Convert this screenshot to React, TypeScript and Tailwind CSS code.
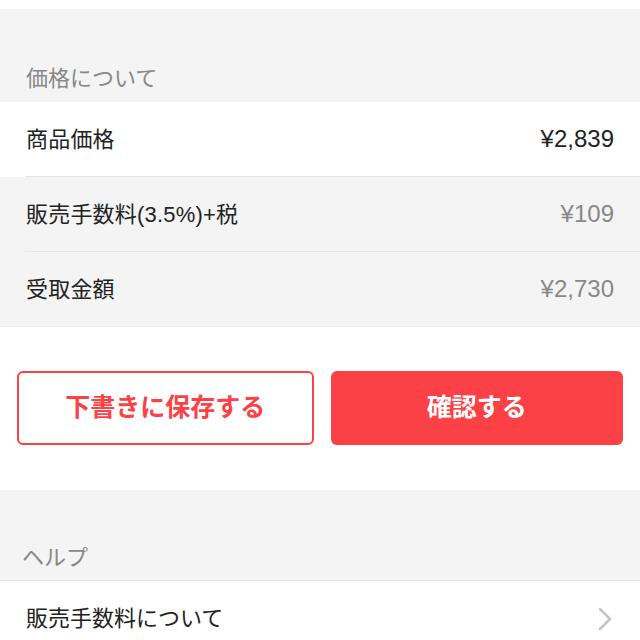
const fees = [
  { label: "商品価格", value: "¥2,839", white: true },
  { label: "販売手数料(3.5%)+税", value: "¥109", white: false },
  { label: "受取金額", value: "¥2,730", white: false },
];

export default function App() {
  return (
    <div
      className="w-[640px] h-[640px] overflow-hidden bg-white text-[#222]"
      style={{ fontFamily: '"Liberation Sans", "Noto Sans CJK JP", sans-serif' }}
    >
      <div className="h-[9px] bg-white" />

      {/* 価格について */}
      <div className="h-[93px] bg-[#f4f4f4] flex items-end px-[26px] pb-[7px]">
        <span className="text-[22px] text-[#888]">価格について</span>
      </div>

      {fees.map((row, i) => (
        <div key={i} className={row.white ? "bg-white" : "bg-[#f4f4f4]"}>
          <div className="h-[74px] flex items-center justify-between px-[26px]">
            <span className="text-[22px] tracking-[0.2px]">{row.label}</span>
            <span className={`text-[24px] ${row.white ? "text-[#222]" : "text-[#888]"}`}>{row.value}</span>
          </div>
          {i < fees.length - 1 && <div className="ml-[25px] h-px bg-[#e6e6e6]" />}
        </div>
      ))}
      <div className="h-px bg-[#ececec]" />

      {/* buttons */}
      <div className="flex gap-[17px] px-[17px] pt-[44px] pb-[45px]">
        <button className="flex-1 h-[74px] rounded-[6px] border-2 border-[#fc4146] text-[#fc4146] text-[25px] font-bold bg-white">
          下書きに保存する
        </button>
        <button className="flex-1 h-[74px] rounded-[6px] bg-[#fc4146] text-white text-[25px] font-bold">
          確認する
        </button>
      </div>

      {/* ヘルプ */}
      <div className="h-[91px] bg-[#f4f4f4] flex items-end px-[22px] pb-[6px] border-b border-[#e8e8e8]">
        <span className="text-[22px] text-[#888]">ヘルプ</span>
      </div>
      <div className="h-[75px] flex items-center justify-between pl-[26px] pr-[28px]">
        <span className="text-[22px]">販売手数料について</span>
        <svg width="14" height="24" viewBox="0 0 14 24" fill="none">
          <polyline
            points="2,2 12,12 2,22"
            stroke="#c4c4c4"
            strokeWidth="2.5"
            strokeLinecap="round"
            strokeLinejoin="round"
          />
        </svg>
      </div>
    </div>
  );
}
